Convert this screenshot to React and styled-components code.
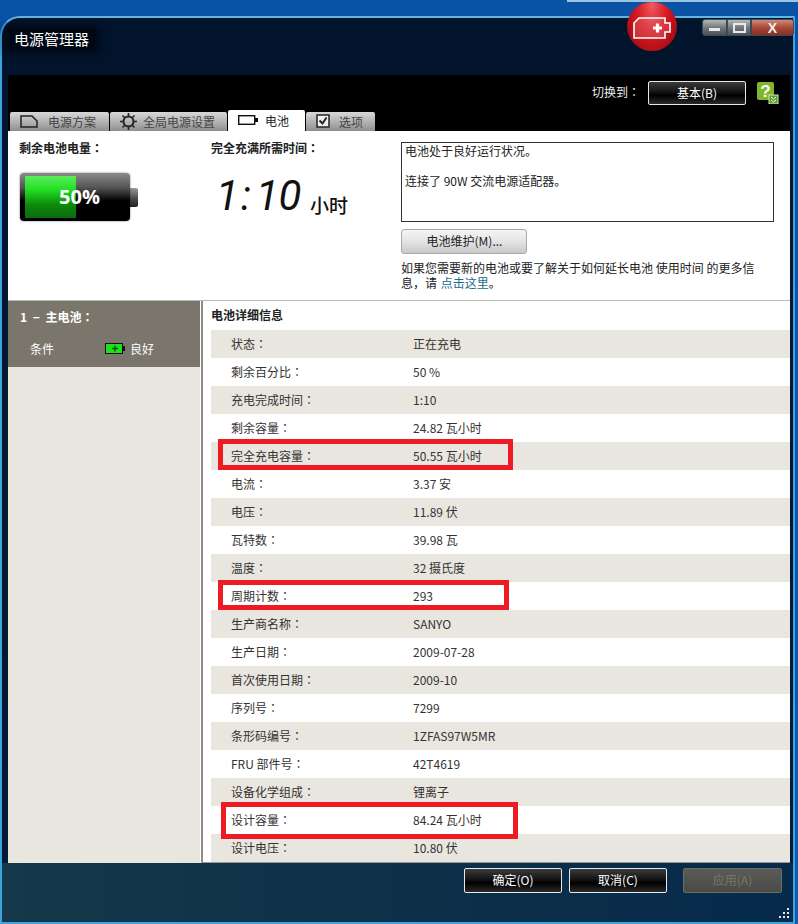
import React from "react";
import styled, { createGlobalStyle } from "styled-components";

const GlobalStyle = createGlobalStyle`
	html, body {
		margin: 0;
		padding: 0;
		background: #0a56a8;
	}
	* {
		box-sizing: border-box;
	}
	body {
		font-family: "Noto Sans CJK SC", "Liberation Sans", sans-serif;
		font-size: 12px;
		color: #222;
	}
`;

const Desktop = styled.div`
	position: relative;
	width: 798px;
	height: 924px;
	padding-top: 16px;
	overflow: hidden;
	background: linear-gradient(180deg, #0a52a6 0%, #0b5cb0 100%);
`;

const DesktopStrip = styled.div`
	position: absolute;
	top: 0;
	left: 567px;
	right: 0;
	height: 2px;
	background: #9cc4dc;
`;

const Window = styled.div`
	position: relative;
	display: flex;
	flex-direction: column;
	width: 795px;
	height: 908px;
	padding: 0 3px 0 6px;
	border: 2px solid #3ea4e0;
	border-top-color: #62b6e2;
	border-radius: 20px 0 0 0;
	background: linear-gradient(180deg, #02142c 0%, #03182f 60%, #041c34 100%);
`;

const TitleBar = styled.div`
	display: flex;
	align-items: flex-start;
	height: 57px;
	padding: 11px 0 0 0;
`;

const Title = styled.div`
	padding: 0 6px;
	font-size: 15px;
	line-height: 20px;
	color: #fff;
	background: rgba(0, 0, 0, 0.55);
	box-shadow: 0 0 8px 4px rgba(0, 0, 0, 0.55);
`;

const Orb = styled.div`
	position: absolute;
	top: -16px;
	left: 625px;
	display: flex;
	align-items: center;
	justify-content: center;
	width: 50px;
	height: 49px;
	border-radius: 50%;
	background: radial-gradient(ellipse at 50% 8%, #ee5a60 0%, #d81c24 40%, #b80f18 70%, #7c0a10 100%);
`;

const WindowButtons = styled.div`
	position: absolute;
	top: 1px;
	right: -1px;
	display: flex;
	height: 17px;
`;

const CaptionButton = styled.div`
	display: flex;
	align-items: center;
	justify-content: center;
	width: ${(p) => p.$width}px;
	border: 1px solid #3a4a58;
	border-radius: ${(p) => p.$radius || "0"};
	background: ${(p) =>
		p.$close
			? "linear-gradient(180deg, #cf8a7c 0%, #a84a38 50%, #8c2e1e 100%)"
			: "linear-gradient(180deg, #b4b8ba 0%, #6c7478 55%, #4a5258 100%)"};
	color: #eee;
	font-family: "Liberation Sans", sans-serif;
	font-size: 14px;
	font-weight: bold;
`;

const TopPanel = styled.div`
	position: relative;
	display: flex;
	align-items: flex-start;
	justify-content: flex-end;
	height: 56px;
	padding: 6px 11px 0 0;
	background: #000;
`;

const SwitchLabel = styled.span`
	margin: 2px 8px 0 0;
	color: #eee;
	font-size: 12px;
	line-height: 17px;
`;

const Colon = styled.span`
	font-family: "Noto Sans CJK TC", "Noto Sans CJK SC", sans-serif;
`;

const DarkButton = styled.div`
	display: flex;
	align-items: center;
	justify-content: center;
	width: ${(p) => p.$width || 98}px;
	height: ${(p) => p.$height || 25}px;
	padding-bottom: 2px;
	border: 1px solid ${(p) => (p.$disabled ? "#6d6d68" : "#e4e8ec")};
	border-radius: 2px;
	background: ${(p) =>
		p.$disabled
			? "linear-gradient(180deg, #5a5a56 0%, #4a4a46 100%)"
			: "linear-gradient(180deg, #3c3c3c 0%, #141414 45%, #000 60%, #2a2a2a 100%)"};
	color: ${(p) => (p.$disabled ? "#77776f" : "#fff")};
	font-size: 12px;
`;

const HelpIcon = styled.div`
	margin: 1px 0 0 11px;
	width: 22px;
	height: 22px;
`;

const Tabs = styled.div`
	position: absolute;
	left: 2px;
	bottom: 0;
	display: flex;
	align-items: flex-end;
	gap: 1px;
`;

const Tab = styled.div`
	display: flex;
	align-items: center;
	gap: ${(p) => p.$gap || 8}px;
	width: ${(p) => p.$width}px;
	height: ${(p) => (p.$active ? 21 : 19)}px;
	padding-left: 10px;
	padding-bottom: 1px;
	border-radius: 2px 2px 0 0;
	background: ${(p) =>
		p.$active ? "#fff" : "linear-gradient(180deg, #d8d8d8 0%, #b4b4b4 50%, #8e8e8e 100%)"};
	color: ${(p) => (p.$active ? "#222" : "#444")};
	font-size: 12px;
`;

const InfoPanel = styled.div`
	display: flex;
	height: 170px;
	background: #fff;
	border-bottom: 1px solid #b8b8b8;
`;

const Column = styled.div`
	width: ${(p) => p.$width}px;
	padding: ${(p) => p.$pad};
`;

const Heading = styled.div`
	font-size: 12px;
	line-height: 17px;
	font-weight: 700;
	color: #222;
`;

const BatteryGauge = styled.div`
	display: flex;
	align-items: center;
	margin: 17px 0 0 1px;
`;

const BatteryBody = styled.div`
	position: relative;
	width: 110px;
	height: 48px;
	padding: 3px 5px;
	border-radius: 4px;
	background: linear-gradient(180deg, #8a8a8a 0%, #555 30%, #000 58%, #000 100%);
	box-shadow: 0 0 2px rgba(0, 0, 0, 0.6);
`;

const BatteryFill = styled.div`
	height: 100%;
	background: linear-gradient(180deg, #5cec5c 0%, #22e022 32%, #0c8a0c 68%, #0c6a0c 100%);
`;

const BatteryText = styled.div`
	position: absolute;
	inset: 0;
	display: flex;
	align-items: center;
	justify-content: center;
	color: #fff;
	font-family: "Open Sans", "Liberation Sans", sans-serif;
	font-size: 20px;
	font-weight: 700;
	padding-left: 9px;
	padding-bottom: 2px;
`;

const BatteryTip = styled.div`
	width: 8px;
	height: 19px;
	border-radius: 0 2px 2px 0;
	background: linear-gradient(180deg, #9a9a9a 0%, #444 60%, #222 100%);
`;

const TimeRow = styled.div`
	display: flex;
	align-items: flex-end;
	margin: 19px 0 0 5px;
	height: 42px;
`;

const ClockCell = styled.span`
	display: inline-block;
	width: ${(p) => p.$width || 20}px;
	text-align: center;
	font-family: "Roboto", "Liberation Sans", sans-serif;
	font-size: 42px;
	font-weight: 400;
	line-height: 42px;
	font-style: italic;
	color: #111;
`;

const ClockUnit = styled.span`
	margin: 0 0 0 6px;
	font-size: 19px;
	font-weight: 500;
	line-height: 24px;
	color: #111;
`;

const MessageBox = styled.div`
	width: 373px;
	height: 80px;
	padding: 0 3px 2px;
	border: 1px solid #333;
	line-height: 15px;
`;

const LightButton = styled.div`
	display: flex;
	align-items: center;
	justify-content: center;
	width: 126px;
	height: 25px;
	margin: 7px 0 6px;
	padding: 0 0 2px 1px;
	border: 1px solid #a8a8a8;
	border-radius: 3px;
	background: linear-gradient(180deg, #f4f4f4 0%, #e4e4e4 50%, #c8c8c8 100%);
`;

const HelpLine = styled.div`
	line-height: 15px;
	white-space: nowrap;
	color: #222;
`;

const HelpLink = styled.span`
	margin-left: 1px;
	color: #1c6a8c;
`;

const Split = styled.div`
	display: flex;
	height: 562px;
`;

const Sidebar = styled.div`
	width: 193px;
	background: #e9e6df;
	border-right: 1px solid #fff;
`;

const SidebarHead = styled.div`
	height: 66px;
	padding: 7px 12px 0;
	background: #7a766c;
	color: #fff;
`;

const SidebarTitle = styled.div`
	font-size: 12px;
	line-height: 18px;
	font-weight: 700;
	word-spacing: 3px;
`;

const Condition = styled.div`
	display: flex;
	align-items: center;
	margin: 14px 0 0 10px;
	line-height: 17px;
`;

const ConditionLabel = styled.span`
	width: 75px;
`;

const ConditionValue = styled.span`
	margin-left: 5px;
`;

const Details = styled.div`
	flex: 1;
	padding-left: 8px;
	background: #fff;
	border-left: 2px solid #8e8c86;
	border-bottom: 1px solid #999;
`;

const DetailsTitle = styled.div`
	height: 29px;
	padding-top: 5px;
	font-size: 12px;
	line-height: 17px;
	font-weight: 700;
	color: #222;
`;

const Row = styled.div`
	position: relative;
	display: flex;
	align-items: center;
	height: 28px;
	padding: 0 0 2px 20px;
	background: ${(p) => (p.$shaded ? "#e9e6df" : "#fff")};
	color: #333;
`;

const RowLabel = styled.span`
	width: 182px;
`;

const Annotation = styled.div`
	position: absolute;
	z-index: 1;
	top: ${(p) => p.$top}px;
	left: ${(p) => p.$left}px;
	width: ${(p) => p.$width}px;
	height: ${(p) => p.$height}px;
	border: 5px solid #ed1c24;
`;

const Footer = styled.div`
	position: relative;
	display: flex;
	flex: 1;
	justify-content: flex-end;
	gap: 7px;
	margin: 0 -3px 0 -6px;
	padding: 5px 11px 0 0;
	background: linear-gradient(90deg, #15384a 0%, #0e3048 50%, #062a4c 100%);
`;

const ApplyGap = styled.div`
	width: 2px;
`;

const Grip = styled.div`
	position: absolute;
	right: 3px;
	bottom: 3px;
	width: 11px;
	height: 11px;
	line-height: 0;
`;

const rows = [
	["状态", "正在充电"],
	["剩余百分比", "50 %"],
	["充电完成时间", "1:10"],
	["剩余容量", "24.82 瓦小时"],
	["完全充电容量", "50.55 瓦小时", { top: -3, left: 7, width: 295, height: 31 }],
	["电流", "3.37 安"],
	["电压", "11.89 伏"],
	["瓦特数", "39.98 瓦"],
	["温度", "32 摄氏度"],
	["周期计数", "293", { top: -2, left: 7, width: 291, height: 30 }],
	["生产商名称", "SANYO"],
	["生产日期", "2009-07-28"],
	["首次使用日期", "2009-10"],
	["序列号", "7299"],
	["条形码编号", "1ZFAS97W5MR"],
	["FRU 部件号", "42T4619"],
	["设备化学组成", "锂离子"],
	["设计容量", "84.24 瓦小时", { top: -4, left: 10, width: 297, height: 37 }],
	["设计电压", "10.80 伏"],
];

const App = () => {
	return (
		<Desktop>
			<GlobalStyle />
			<DesktopStrip />
			<Window>
				<TitleBar>
					<Title>电源管理器</Title>
				</TitleBar>
				<Orb>
					<svg width="38" height="22" viewBox="0 0 38 22" style={{ marginTop: 2 }}>
						<path d="M6 1h26v5h5v9h-5v6H1V6z" fill="rgba(255,255,255,0.14)" stroke="#fff" strokeWidth="1.600" />
						<path d="M20 11h9M24.500 6.500v9" stroke="#fff" strokeWidth="3.200" />
					</svg>
				</Orb>
				<WindowButtons>
					<CaptionButton $width={25} $radius="3px 0 0 3px">
						<svg width="11" height="8" viewBox="0 0 11 8"><rect y="4" width="11" height="3" fill="#e8e8e8" /></svg>
					</CaptionButton>
					<CaptionButton $width={24}>
						<svg width="13" height="10"><rect x="1" y="1" width="11" height="8" fill="none" stroke="#e8e8e8" strokeWidth="2" /></svg>
					</CaptionButton>
					<CaptionButton $width={43} $close $radius="0 3px 3px 0">X</CaptionButton>
				</WindowButtons>
				<TopPanel>
					<SwitchLabel>切换到<Colon>：</Colon></SwitchLabel>
					<DarkButton $height={24}>基本(B)</DarkButton>
					<HelpIcon>
						<svg width="22" height="22" viewBox="0 0 22 22">
							<rect x="0" y="0" width="17" height="18" rx="2" fill="#7fb62c" />
							<text x="8.500" y="15" textAnchor="middle" fontFamily="Liberation Sans" fontWeight="bold" fontSize="17" fill="#fff">?</text>
							<rect x="12" y="13" width="9" height="9" fill="#5c9a2a" stroke="#d8e8c0" strokeWidth="1" />
							<path d="M14 15l2.500 2 2.500-2M14 18l2.500 2 2.500-2" stroke="#fff" fill="none" />
						</svg>
					</HelpIcon>
					<Tabs>
						<Tab $width={99} $gap={10}>
							<svg width="18" height="13" viewBox="0 0 18 13">
								<path d="M1 1h11l5 5v6H1z" fill="none" stroke="#222" strokeWidth="1.500" />
							</svg>
							电源方案
						</Tab>
						<Tab $width={117} $gap={6}>
							<svg width="17" height="17" viewBox="0 0 17 17">
								<circle cx="8.500" cy="8.500" r="5" fill="none" stroke="#222" strokeWidth="2" />
								<path d="M8.500 0v3M8.500 14v3M0 8.500h3M14 8.500h3M2.500 2.500l2 2M12.500 12.500l2 2M14.500 2.500l-2 2M4.500 12.500l-2 2" stroke="#222" strokeWidth="1.600" />
							</svg>
							全局电源设置
						</Tab>
						<Tab $width={77} $active $gap={7}>
							<svg width="20" height="10" viewBox="0 0 20 10">
								<rect x="0.700" y="0.700" width="16" height="8.600" fill="none" stroke="#111" strokeWidth="1.400" />
								<rect x="17" y="3" width="3" height="4" fill="#111" />
							</svg>
							电池
						</Tab>
						<Tab $width={69} $gap={9}>
							<svg width="14" height="14" viewBox="0 0 14 14">
								<rect x="1" y="1" width="12" height="12" fill="#eee" stroke="#222" strokeWidth="1.500" />
								<path d="M3.500 6.500l3 3 4-6" fill="none" stroke="#222" strokeWidth="2" />
							</svg>
							选项
						</Tab>
					</Tabs>
				</TopPanel>
				<InfoPanel>
					<Column $width={192} $pad="8px 0 0 11px">
						<Heading>剩余电池电量<Colon>：</Colon></Heading>
						<BatteryGauge>
							<BatteryBody>
								<BatteryFill style={{ width: "51%" }} />
								<BatteryText>50%</BatteryText>
							</BatteryBody>
							<BatteryTip />
						</BatteryGauge>
					</Column>
					<Column $width={201} $pad="8px 0 0 11px">
						<Heading>完全充满所需时间<Colon>：</Colon></Heading>
						<TimeRow>
							<ClockCell>1</ClockCell>
							<ClockCell>:</ClockCell>
							<ClockCell>1</ClockCell>
							<ClockCell $width={28}>0</ClockCell>
							<ClockUnit>小时</ClockUnit>
						</TimeRow>
					</Column>
					<Column $width={389} $pad="11px 0 0 0">
						<MessageBox>
							电池处于良好运行状况。
							<br />
							<br />
							连接了 90W 交流电源适配器。
						</MessageBox>
						<LightButton>电池维护(M)...</LightButton>
						<HelpLine>如果您需要新的电池或要了解关于如何延长电池 使用时间 的更多信</HelpLine>
						<HelpLine>息，请 <HelpLink>点击这里</HelpLink>。</HelpLine>
					</Column>
				</InfoPanel>
				<Split>
					<Sidebar>
						<SidebarHead>
							<SidebarTitle>1 − 主电池<Colon>：</Colon></SidebarTitle>
							<Condition>
								<ConditionLabel>条件</ConditionLabel>
								<svg width="20" height="11" viewBox="0 0 20 11">
									<rect x="0.500" y="0.500" width="17" height="10" fill="#1ee01e" stroke="#111" />
									<rect x="18" y="3" width="2" height="5" fill="#111" />
									<path d="M7 5.500h6M10 2.500v6" stroke="#0a5a0a" strokeWidth="1.500" />
								</svg>
								<ConditionValue>良好</ConditionValue>
							</Condition>
						</SidebarHead>
					</Sidebar>
					<Details>
						<DetailsTitle>电池详细信息</DetailsTitle>
						{rows.map(([label, value, box], i) => (
							<Row key={label} $shaded={i % 2 === 0}>
								<RowLabel>{label}<Colon>：</Colon></RowLabel>
								<span>{value}</span>
								{box && <Annotation $top={box.top} $left={box.left} $width={box.width} $height={box.height} />}
							</Row>
						))}
					</Details>
				</Split>
				<Footer>
					<DarkButton>确定(O)</DarkButton>
					<DarkButton>取消(C)</DarkButton>
					<ApplyGap />
					<DarkButton $disabled $width={99}>应用(A)</DarkButton>
					<Grip>
						<svg width="11" height="11" viewBox="0 0 11 11" fill="#e8e8e8">
							<rect x="8" y="0" width="2" height="2" />
							<rect x="4" y="4" width="2" height="2" />
							<rect x="8" y="4" width="2" height="2" />
							<rect x="0" y="8" width="2" height="2" />
							<rect x="4" y="8" width="2" height="2" />
							<rect x="8" y="8" width="2" height="2" />
						</svg>
					</Grip>
				</Footer>
			</Window>
		</Desktop>
	);
};

export default App;
